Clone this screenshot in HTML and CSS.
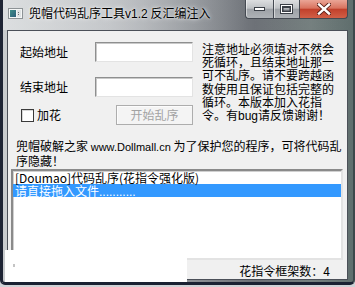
FILE: index.html
```html
<!DOCTYPE html>
<html lang="zh-CN">
<head>
<meta charset="utf-8">
<title>兜帽代码乱序工具v1.2 反汇编注入</title>
<link rel="stylesheet" href="styles.css">
</head>
<body>
<div class="window">
  <div class="frame">
    <div class="titlebar">
      <svg class="app-icon" width="15" height="11" viewBox="0 0 15 11">
        <defs>
          <linearGradient id="ig" x1="0" y1="0" x2="1" y2="1">
            <stop offset="0" stop-color="#3f8f8a"/>
            <stop offset="1" stop-color="#2d5f7a"/>
          </linearGradient>
        </defs>
        <rect x="0.5" y="0.5" width="14" height="10" fill="#f4f6f6" stroke="#8d9396"/>
        <rect x="2" y="2" width="6" height="7" fill="url(#ig)"/>
        <rect x="9" y="2" width="4" height="7" fill="#dfe3e4"/>
        <rect x="10" y="4" width="1" height="1" fill="#6a7074"/>
        <rect x="10" y="6" width="1" height="1" fill="#6a7074"/>
      </svg>
      <div class="title">兜帽代码乱序工具<span class="latin">v1.2</span> 反汇编注入</div>
      <div class="caption">
        <div class="cbtn min">
          <svg width="13" height="6" viewBox="0 0 13 6"><rect x="1.5" y="1.5" width="10" height="3" fill="#fff" stroke="#3a3f46"/></svg>
        </div>
        <div class="cbtn max">
          <svg width="13" height="10" viewBox="0 0 13 10"><rect x="1.5" y="1.5" width="10" height="7" fill="none" stroke="#3a3f46" stroke-width="3"/><rect x="1.5" y="1.5" width="10" height="7" fill="none" stroke="#fff" stroke-width="1"/><rect x="3" y="3.5" width="7" height="3.5" fill="none" stroke="#3a3f46" stroke-width="1"/></svg>
        </div>
        <div class="cbtn close">
          <svg width="14" height="12" viewBox="0 0 14 12"><path d="M2 1.5 L12 10.5 M12 1.5 L2 10.5" stroke="#5a1f16" stroke-width="4.2" stroke-linecap="square"/><path d="M2 1.5 L12 10.5 M12 1.5 L2 10.5" stroke="#fff" stroke-width="2.4" stroke-linecap="square"/></svg>
        </div>
      </div>
    </div>

    <div class="client">
      <div class="top">
        <div class="form">
          <div class="row">
            <span class="label">起始地址</span>
            <span class="input"></span>
          </div>
          <div class="row row-gap">
            <span class="label">结束地址</span>
            <span class="input"></span>
          </div>
          <div class="row row-check">
            <span class="checkbox"></span>
            <span class="check-label">加花</span>
            <span class="button disabled">开始乱序</span>
          </div>
        </div>
        <div class="note">注意地址必须填对不然会<br>死循环，且结束地址那一<br>可不乱序。请不要跨越函<br>数使用且保证包括完整的<br>循环。本版本加入花指<br>令。有<span class="latin">bug</span>请反馈谢谢！</div>
      </div>
      <div class="desc">兜帽破解之家 <span class="latin small">www.Dollmall.cn</span> 为了保护您的程序，可将代码乱<br>序隐藏！</div>
      <div class="list">
        <div class="item">[Doumao]代码乱序(花指令强化版)</div>
        <div class="item selected">请直接拖入文件<span class="latin">...........</span></div>
      </div>
      <div class="status">花指令框架数：4</div>
    </div>
  </div>
  <div class="occluder"></div>
</div>
</body>
</html>
```

FILE: styles.css
```css
body {
  margin: 0;
  background: #cdd0d4;
}

.window {
  position: relative;
  width: 355px;
  height: 287px;
  box-sizing: border-box;
  border-bottom: 2px solid #cfd2d6;
  background: #cfd2d6;
  font-family: "Noto Sans CJK SC", sans-serif;
  font-size: 12px;
  color: #000;
  overflow: hidden;
}

.latin {
  font-family: "Liberation Sans", "Noto Sans CJK SC", sans-serif;
}

.latin.small {
  font-size: 11px;
}

.frame {
  height: 285px;
  box-sizing: border-box;
  border-left: 3px solid #1e2434;
  border-right: 2px solid #3d484b;
  border-bottom: 3px solid #1a2132;
  border-radius: 0 0 5px 5px;
  background: linear-gradient(90deg, #c9ccce 0%, #b2b5b9 30%, #8a8e93 55%, #6c7076 72%, #75807f 88%, #5f6e6d 100%);
  display: flex;
  flex-direction: column;
}

.titlebar {
  height: 30px;
  display: flex;
  align-items: flex-start;
  background: linear-gradient(90deg, rgba(235,237,238,.55) 0%, rgba(220,222,224,.35) 40%, rgba(120,124,130,.1) 70%, rgba(0,0,0,0) 100%);
}

.app-icon {
  margin: 8px 0 0 5px;
  flex: none;
}

.title {
  margin: 5px 0 0 6px;
  line-height: 16px;
  white-space: nowrap;
  text-shadow: 0 0 5px rgba(255,255,255,.9), 0 0 2px rgba(255,255,255,.8);
}

.caption {
  margin-left: auto;
  margin-right: 5px;
  display: flex;
  height: 19px;
}

.cbtn {
  height: 19px;
  box-sizing: border-box;
  border: 1px solid #454a52;
  border-top: none;
  display: flex;
  align-items: center;
  justify-content: center;
}

.cbtn.min {
  width: 28px;
  border-right: none;
  border-bottom-left-radius: 4px;
  background: linear-gradient(#dcdee0 0%, #c0c3c6 45%, #9ea2a7 52%, #aeb2b6 100%);
  box-shadow: inset 1px 0 rgba(255,255,255,.5);
}

.cbtn.max {
  width: 27px;
  background: linear-gradient(#dcdee0 0%, #c0c3c6 45%, #9ea2a7 52%, #aeb2b6 100%);
  box-shadow: inset 1px 0 rgba(255,255,255,.5);
}

.cbtn.close {
  width: 48px;
  border-left: none;
  border-bottom-right-radius: 4px;
  background: linear-gradient(#eaa596 0%, #d9735f 45%, #c2412c 52%, #d15f46 100%);
}

.client {
  margin-left: 4px;
  width: 341px;
  height: 250px;
  box-sizing: border-box;
  border: 1px solid #4b5058;
  background: #f0f0f0;
}

.top {
  display: flex;
  padding-top: 11px;
}

.form {
  width: 185px;
  padding-left: 12px;
  box-sizing: border-box;
  display: flex;
  flex-direction: column;
  flex: none;
}

.row {
  display: flex;
  align-items: center;
  height: 20px;
}

.row-gap {
  margin-top: 15px;
}

.row-check {
  margin-top: 8px;
}

.label {
  width: 75px;
  line-height: 20px;
  flex: none;
}

.input {
  width: 98px;
  height: 20px;
  box-sizing: border-box;
  background: #fff;
  border: 1px solid;
  border-color: #8e8f8f #e3e3e3 #e3e3e3 #8e8f8f;
  box-shadow: inset 1px 1px #c9c9c9;
}

.checkbox {
  width: 13px;
  height: 13px;
  margin-left: 1px;
  box-sizing: border-box;
  border: 1px solid #3a3a3a;
  background: #fff;
  box-shadow: inset 1px 1px #d8d8d8;
}

.check-label {
  margin-left: 3px;
  line-height: 20px;
}

.button {
  margin-left: auto;
  width: 77px;
  height: 20px;
  box-sizing: border-box;
  border: 1px solid #adadad;
  background: #f4f4f4;
  box-shadow: inset 1px 1px #fcfcfc;
  text-align: center;
  line-height: 18px;
}

.button.disabled {
  color: #a3a3a3;
}

.note {
  margin-left: 9px;
  line-height: 13.2px;
  white-space: nowrap;
}

.desc {
  margin-top: 14px;
  padding-left: 8px;
  line-height: 13px;
  white-space: nowrap;
}

.list {
  margin: 2px 0 0 3px;
  width: 332px;
  height: 91px;
  box-sizing: border-box;
  background: #fff;
  border: 2px solid;
  border-color: #8a8a8a #e3e3e3 #e3e3e3 #8a8a8a;
  box-shadow: inset 1px 1px #d0d0d0;
}

.item {
  height: 13px;
  line-height: 13px;
  padding-left: 2px;
  white-space: nowrap;
}

.item.selected {
  background: #3399ff;
  color: #fff;
}

.status {
  margin-top: 4px;
  padding-right: 17px;
  text-align: right;
  line-height: 14px;
}

.occluder {
  position: absolute;
  left: 5px;
  top: 250px;
  width: 182px;
  height: 32px;
  background: #fff;
}

.occluder::after {
  content: "";
  position: absolute;
  left: 8px;
  top: 14px;
  width: 2px;
  height: 3px;
  background: #c4c4c4;
}
```
